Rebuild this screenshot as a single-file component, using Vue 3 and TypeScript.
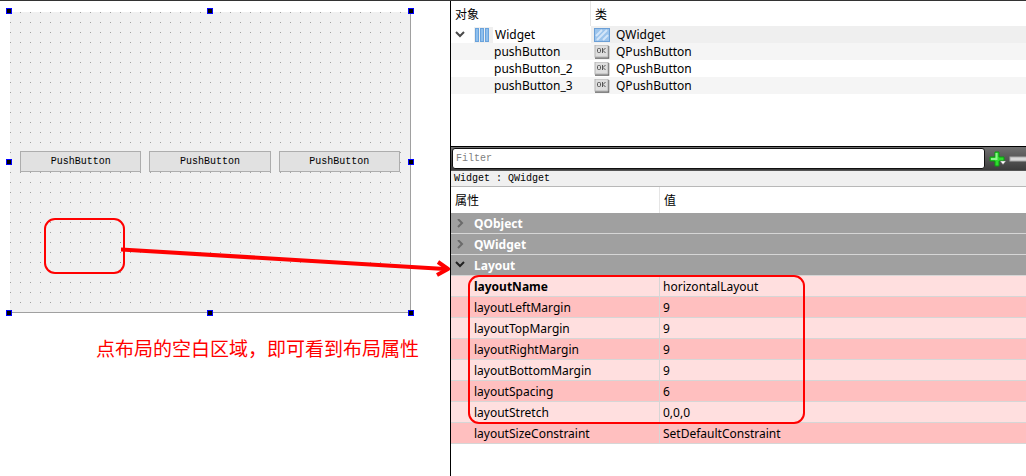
<script setup lang="ts">
import { ref } from 'vue'

interface ObjectRow {
  name: string
  type: string
  root?: boolean
}

interface PropertyRow {
  name: string
  value: string
  changed?: boolean
}

const filter = ref('')

const buttons: string[] = ['PushButton', 'PushButton', 'PushButton']

const handles: string[] = ['nw', 'n', 'ne', 'w', 'e', 'sw', 's', 'se']

const objects: ObjectRow[] = [
  { name: 'Widget', type: 'QWidget', root: true },
  { name: 'pushButton', type: 'QPushButton' },
  { name: 'pushButton_2', type: 'QPushButton' },
  { name: 'pushButton_3', type: 'QPushButton' },
]

const groups = ref([
  { name: 'QObject', open: false },
  { name: 'QWidget', open: false },
  { name: 'Layout', open: true },
])

const properties: PropertyRow[] = [
  { name: 'layoutName', value: 'horizontalLayout', changed: true },
  { name: 'layoutLeftMargin', value: '9' },
  { name: 'layoutTopMargin', value: '9' },
  { name: 'layoutRightMargin', value: '9' },
  { name: 'layoutBottomMargin', value: '9' },
  { name: 'layoutSpacing', value: '6' },
  { name: 'layoutStretch', value: '0,0,0' },
  { name: 'layoutSizeConstraint', value: 'SetDefaultConstraint' },
]
</script>

<template>
  <div class="designer">
    <main class="workspace">
      <div class="form">
        <div class="form-row">
          <button v-for="(label, i) in buttons" :key="i" type="button" class="push">{{ label }}</button>
        </div>
        <i v-for="h in handles" :key="h" class="handle" :class="h"></i>
        <div class="ring blank-ring"></div>
      </div>
      <p class="note">点布局的空白区域，即可看到布局属性</p>
      <svg class="arrow" width="329" height="34" viewBox="0 0 329 34" aria-hidden="true">
        <path d="M0 4.500 L324 24" fill="none" stroke="#f00" stroke-width="4" />
        <path d="M317 17 L327 24 L316 30" fill="none" stroke="#f00" stroke-width="4" stroke-linejoin="round" />
      </svg>
    </main>

    <aside class="side">
      <section class="inspector">
        <table class="tree">
          <thead>
            <tr>
              <th class="name-col">对象</th>
              <th>类</th>
            </tr>
          </thead>
          <tbody>
            <tr v-for="o in objects" :key="o.name" :class="{ root: o.root }">
              <td>
                <div class="cell" :class="{ child: !o.root }">
                  <button v-if="o.root" type="button" class="twist" aria-label="Widget">
                    <svg width="10" height="10" viewBox="0 0 10 10"><path d="M1 2 L5 6 L9 2" fill="none" stroke="#4a4a4a" stroke-width="2" /></svg>
                  </button>
                  <span v-if="o.root" class="icon-bg">
                    <svg width="16" height="16" viewBox="0 0 16 16">
                      <g fill="#8fc0ee" stroke="#6aa3dc">
                        <rect x="1.500" y="1.500" width="3" height="13" />
                        <rect x="6.500" y="1.500" width="3" height="13" />
                        <rect x="11.500" y="1.500" width="3" height="13" />
                      </g>
                    </svg>
                  </span>
                  <span>{{ o.name }}</span>
                </div>
              </td>
              <td>
                <div class="cell type">
                  <svg v-if="o.root" width="16" height="14" viewBox="0 0 16 14">
                    <rect x="0.500" y="0.500" width="15" height="13" fill="#9cc4ec" stroke="#6b9fd6" />
                    <path d="M2 8 L8 2 M3 12 L13 2 M9 12 L14 7" stroke="#d3e5f8" stroke-width="2" fill="none" />
                  </svg>
                  <svg v-else width="16" height="14" viewBox="0 0 16 14">
                    <path d="M1 13 H14.500 V1" fill="none" stroke="#606060" stroke-width="1.500" />
                    <rect x="1" y="0" width="13" height="12" fill="#dedede" stroke="#b4b4b4" stroke-width="1" />
                    <rect x="3.500" y="3.500" width="3" height="4" rx="1" fill="none" stroke="#555" />
                    <path d="M8.500 3 V8 M11.500 3 L9 5.500 L11.500 8" fill="none" stroke="#555" />
                  </svg>
                  <span>{{ o.type }}</span>
                </div>
              </td>
            </tr>
          </tbody>
        </table>
      </section>

      <section class="editor">
        <div class="toolbar">
          <input v-model="filter" type="text" placeholder="Filter" aria-label="Filter" />
          <button type="button" class="tool" aria-label="+">
            <svg width="18" height="18" viewBox="0 0 18 18">
              <path d="M6 2 H10 V7 H15 V11 H10 V16 H6 V11 H1 V7 H6 Z" fill="#2fdc2f" stroke="#0d9a10" />
              <path d="M7.500 3 V9 H2" fill="none" stroke="#8cf58c" stroke-width="2" />
              <path d="M11 11 H17 L14 14.500 Z" fill="#fff" stroke="#666" stroke-width="0.500" />
            </svg>
          </button>
          <button type="button" class="tool last" aria-label="−">
            <svg width="18" height="18" viewBox="0 0 18 18">
              <rect x="1" y="7" width="17" height="4" fill="#d8d8d8" stroke="#aaa" stroke-width="1" />
            </svg>
          </button>
        </div>
        <div class="caption">Widget : QWidget</div>

        <div class="grid-wrap">
          <table class="props">
            <thead>
              <tr>
                <th class="prop-col">属性</th>
                <th>值</th>
              </tr>
            </thead>
            <tbody>
              <tr v-for="g in groups" :key="g.name" class="group">
                <td colspan="2">
                  <div class="cell">
                    <button type="button" class="twist" :aria-label="g.name" @click="g.open = !g.open">
                      <svg width="10" height="10" viewBox="0 0 10 10">
                        <path v-if="g.open" d="M1 1 L5 5 L9 1" fill="none" stroke="#222" stroke-width="2" />
                        <path v-else d="M3 0 L7 4 L3 8" fill="none" stroke="#6a6a6a" stroke-width="2" />
                      </svg>
                    </button>
                    <span>{{ g.name }}</span>
                  </div>
                </td>
              </tr>
              <template v-if="groups[2].open">
                <tr v-for="p in properties" :key="p.name" class="prop" :class="{ changed: p.changed }">
                  <td>{{ p.name }}</td>
                  <td>{{ p.value }}</td>
                </tr>
              </template>
            </tbody>
          </table>
          <div class="ring props-ring"></div>
        </div>
      </section>
    </aside>
  </div>
</template>

<style>
body {
  margin: 0;
  background: #fff;
}
</style>

<style scoped>
.designer {
  display: flex;
  box-sizing: border-box;
  min-height: 100vh;
  border-top: 1px solid #333;
  background: #fff;
  color: #000;
  font-family: "Noto Sans", "Noto Sans CJK SC", sans-serif;
  font-size: 12px;
  overflow: hidden;
}
button {
  font: inherit;
  color: inherit;
}
svg {
  display: block;
  flex: none;
}

.workspace {
  position: relative;
  flex: 0 0 450px;
}
.form {
  position: relative;
  display: flex;
  align-items: center;
  box-sizing: border-box;
  width: 401px;
  height: 301px;
  margin: 11px 0 0 10px;
  border-right: 1px solid #a0a0a0;
  border-bottom: 1px solid #a0a0a0;
  background-color: #f0f0f0;
  background-image: linear-gradient(to right, transparent 1px, #f0f0f0 1px), linear-gradient(to bottom, #a0a0a0 1px, #f0f0f0 1px);
  background-size: 10px 10px;
}
.form-row {
  flex: 1;
  display: grid;
  grid-template-columns: repeat(3, 1fr);
  gap: 8px;
  padding: 0 10px 1px;
}
.push {
  height: 21px;
  padding: 0;
  border: 1px solid #adadad;
  border-radius: 0;
  background: #e1e1e1;
  font-family: "Liberation Mono", monospace;
  font-size: 10px;
  line-height: 19px;
}
.handle {
  position: absolute;
  box-sizing: border-box;
  width: 6px;
  height: 6px;
  border: 1px solid #00f;
  background: #000;
}
.nw, .n, .ne { top: -4px; }
.w, .e { top: 147px; }
.sw, .s, .se { bottom: -4px; }
.nw, .w, .sw { left: -4px; }
.n, .s { left: 197px; }
.ne, .e, .se { right: -4px; }

.ring {
  position: absolute;
  box-sizing: border-box;
  border: 2px solid #f00;
  border-radius: 11px;
  pointer-events: none;
}
.blank-ring {
  left: 34px;
  top: 206px;
  width: 81px;
  height: 56px;
}
.note {
  margin: 21px 0 0 96px;
  color: #f00;
  font-family: "Noto Sans CJK SC", sans-serif;
  font-size: 19px;
  line-height: 28px;
  white-space: nowrap;
}
.arrow {
  position: absolute;
  left: 121px;
  top: 244px;
}

.side {
  flex: 1;
  min-width: 0;
  border-left: 1px solid #000;
}
.inspector {
  height: 145px;
}
table {
  width: 100%;
  border-collapse: separate;
  border-spacing: 0;
  table-layout: fixed;
}
th {
  height: 25px;
  padding: 0 4px;
  font-weight: 400;
  text-align: left;
}
.name-col {
  box-sizing: border-box;
  width: 140px;
  border-right: 1px solid #e5e5e5;
}
td {
  padding: 0;
  white-space: nowrap;
}
.cell {
  display: flex;
  align-items: center;
}
.tree .cell {
  height: 17px;
  line-height: 17px;
}
.tree .child {
  padding-left: 43px;
}
.tree .type {
  gap: 6px;
  padding-left: 3px;
}
.tree tbody tr:nth-child(even) {
  background: #f5f5f5;
}
.tree .root td:last-child {
  background: #efefef;
}
.icon-bg {
  margin-right: 2px;
  padding: 0 3px 0 0;
  background: #efefef;
}
.twist {
  display: flex;
  flex: none;
  align-items: center;
  width: 23px;
  height: 16px;
  padding: 0 0 0 4px;
  border: 0;
  background: none;
}

.toolbar {
  display: flex;
  align-items: center;
  height: 23px;
  padding: 0 0 0 1px;
  border-top: 1px solid #000;
  border-bottom: 1px solid #555;
  background: linear-gradient(#707070, #3c3c3c);
  overflow: hidden;
}
.toolbar input {
  flex: 1;
  min-width: 0;
  box-sizing: border-box;
  height: 21px;
  padding: 0 3px;
  border: 1px solid #111;
  border-radius: 3px;
  background: #fff;
  font-family: "Liberation Mono", monospace;
  font-size: 10px;
}
.toolbar input::placeholder {
  color: #808080;
  opacity: 1;
}
.tool {
  display: flex;
  flex: none;
  align-items: center;
  width: 24px;
  height: 22px;
  padding: 0 0 0 4px;
  border: 0;
  background: none;
}
.last {
  width: 17px;
  padding: 0;
  overflow: hidden;
}
.caption {
  padding: 0 3px;
  border-bottom: 1px solid #b8b8b8;
  background: #f0f0f0;
  font-family: "Liberation Mono", monospace;
  font-size: 10px;
  line-height: 15px;
}
.grid-wrap {
  position: relative;
}
.props th {
  height: 26px;
}
.prop-col {
  box-sizing: border-box;
  width: 209px;
  border-right: 1px solid #e5e5e5;
}
.props td {
  box-sizing: border-box;
  height: 21px;
  padding-top: 2px;
  border-bottom: 1px solid #d6d6d6;
  line-height: 18px;
}
.group td {
  background: #a0a0a0;
  color: #fff;
  font-weight: 700;
}
.prop {
  background: #ffbfbf;
}
.prop:nth-child(even) {
  background: #ffdfdf;
}
.prop td:first-child {
  padding-left: 23px;
  border-right: 1px solid #d6d6d6;
}
.prop td:last-child {
  padding-left: 3px;
}
.changed td:first-child {
  font-weight: 700;
}
.props-ring {
  left: 17px;
  top: 88px;
  width: 337px;
  height: 149px;
}
</style>
